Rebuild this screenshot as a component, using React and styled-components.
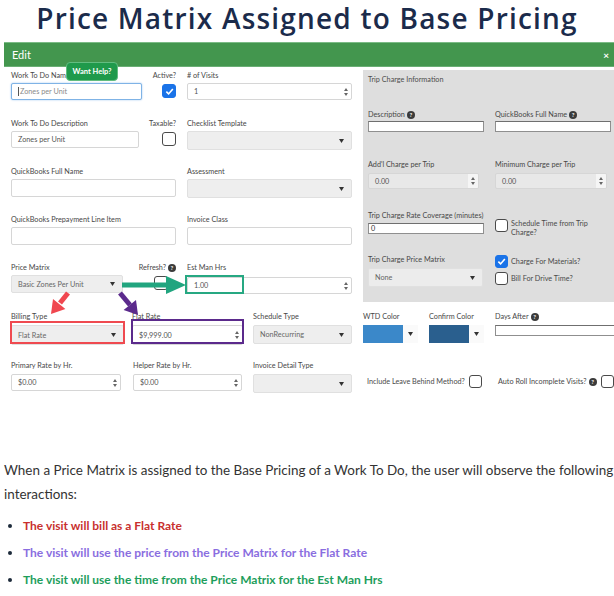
import React from "react";
import styled, { createGlobalStyle } from "styled-components";

const GlobalStyle = createGlobalStyle`
  html, body { margin: 0; padding: 0; background: #fff; }
  body { width: 614px; height: 596px; overflow: hidden; }
`;

const Page = styled.div`
  width: 614px;
  height: 596px;
  overflow: hidden;
`;

const Title = styled.h1`
  margin: 0;
  height: 42px;
  line-height: 36px;
  text-align: center;
  font-family: "Open Sans", sans-serif;
  font-weight: 600;
  font-size: 28px;
  letter-spacing: 1.2px;
  color: #1b2b4b;
  white-space: nowrap;
`;

const Modal = styled.section`
  position: relative;
  margin-left: 4px;
  width: 610px;
  font-family: Lato, "Open Sans", sans-serif;
`;

const ModalHeader = styled.div`
  height: 23px;
  background: #43964e;
  border-top: 1px solid #7bbb86;
  border-bottom: 1px solid #6aae75;
  display: flex;
  align-items: center;
  justify-content: space-between;
  padding: 0 5px 0 8px;
  color: #fff;
  font-size: 11px;
`;

const Close = styled.span`
  font-size: 10px;
  font-weight: 700;
`;

const HelpBadge = styled.div`
  position: absolute;
  left: 62px;
  top: 20px;
  width: 52px;
  height: 19px;
  box-sizing: border-box;
  border-radius: 4px;
  background: #1f9a4b;
  border: 1px solid #62bd80;
  color: #fff;
  font-size: 7.5px;
  font-weight: 700;
  display: flex;
  align-items: center;
  justify-content: center;
  z-index: 2;
`;

const FormBody = styled.div`
  position: relative;
  padding: 0 0 9px 7px;
`;

const TopSection = styled.div`
  display: flex;
  align-items: flex-start;
  gap: 11px;
`;

const LeftFields = styled.div`
  width: 341px;
  padding-top: 4px;
  display: flex;
  flex-direction: column;
`;

const LeftRow = styled.div`
  display: grid;
  grid-template-columns: 165px 165px;
  column-gap: 11px;
  align-items: start;
  height: 48px;
  &:last-child {
    height: auto;
  }
`;

const ColA = styled.div`
  display: flex;
  justify-content: space-between;
  align-items: flex-start;
`;

const Field = styled.div`
  display: flex;
  flex-direction: column;
  gap: ${({ $gap }) => $gap ?? 2}px;
  width: ${({ $w }) => ($w ? `${$w}px` : "100%")};
`;

const Label = styled.div`
  font-size: 7.25px;
  line-height: 10px;
  color: #474747;
  white-space: nowrap;
  display: flex;
  align-items: center;
  gap: 2px;
`;

const Help = styled.span`
  display: inline-flex;
  width: 8px;
  height: 8px;
  border-radius: 50%;
  background: #3b3b3b;
  color: #fff;
  font-size: 6px;
  font-weight: 700;
  align-items: center;
  justify-content: center;
`;

const TextBox = styled.div`
  box-sizing: border-box;
  height: ${({ $h }) => $h ?? 18}px;
  border: 1px solid ${({ $focus }) => ($focus ? "#7fb3e6" : "#d6d6d6")};
  box-shadow: ${({ $focus }) => ($focus ? "0 0 2px #9cc6ee" : "none")};
  border-radius: 2px;
  background: ${({ $bg }) => $bg ?? "#fff"};
  padding: 0 0 0 6px;
  font-size: 7.25px;
  color: ${({ $muted }) => ($muted ? "#8a8a8a" : "#555")};
  display: flex;
  align-items: center;
  justify-content: space-between;
  overflow: hidden;
  white-space: nowrap;
`;

const ThinBox = styled.div`
  box-sizing: border-box;
  height: ${({ $h }) => $h ?? 11}px;
  width: ${({ $w }) => ($w ? `${$w}px` : "100%")};
  background: #fff;
  border: 1px solid #8f8f8f;
  border-top-color: #6f6f6f;
  font-size: 7.25px;
  color: #333;
  padding-left: 2px;
  display: flex;
  align-items: center;
`;

const Cursor = styled.span`
  display: inline-block;
  width: 1px;
  height: 9px;
  background: #555;
  margin-right: 1px;
  vertical-align: middle;
`;

const SpinCell = styled.div`
  width: 10px;
  height: 100%;
  display: flex;
  flex-direction: column;
  align-items: center;
  justify-content: center;
  gap: 2px;
  background: ${({ $bg }) => $bg ?? "transparent"};
`;

const SelectBox = styled.div`
  box-sizing: border-box;
  height: ${({ $h }) => $h ?? 19}px;
  border: 1px solid #e0e0e0;
  border-radius: 2px;
  background: ${({ $bg }) => $bg ?? "#eeeeee"};
  padding: 0 7px 0 6px;
  font-size: 7.25px;
  color: #666;
  display: flex;
  align-items: center;
  justify-content: space-between;
  white-space: nowrap;
`;

const CheckGroup = styled.div`
  display: flex;
  flex-direction: column;
  align-items: flex-end;
  gap: 3px;
  & > :last-child {
    margin-right: ${({ $inset }) => $inset ?? 0}px;
  }
`;

const Box = styled.div`
  box-sizing: border-box;
  width: ${({ $s }) => $s ?? 14}px;
  height: ${({ $s }) => $s ?? 14}px;
  flex: none;
  border-radius: 3px;
  border: 1.5px solid ${({ $on }) => ($on ? "#1a73e8" : "#4a4a4a")};
  background: ${({ $on }) => ($on ? "#1a73e8" : "#fff")};
  display: flex;
  align-items: center;
  justify-content: center;
`;

const TripPanel = styled.div`
  flex: 1;
  margin-top: 3px;
  background: #dedede;
  padding: 5px 0 15px 5px;
`;

const PanelTitle = styled.div`
  font-size: 7.25px;
  line-height: 10px;
  color: #4d4d4d;
`;

const TripGrid = styled.div`
  display: grid;
  grid-template-columns: 116px 116px;
  column-gap: 11px;
  align-items: start;
  margin-top: ${({ $mt }) => $mt}px;
`;

const CheckList = styled.div`
  display: flex;
  flex-direction: column;
  gap: 4px;
  margin-top: ${({ $mt }) => $mt ?? 0}px;
`;

const CheckItem = styled.div`
  display: flex;
  align-items: ${({ $top }) => ($top ? "flex-start" : "center")};
  gap: 3px;
  font-size: 7.25px;
  line-height: 9px;
  color: #4a4a4a;
`;

const BottomRow = styled.div`
  display: grid;
  grid-template-columns: ${({ $cols }) => $cols};
  align-items: start;
  margin-top: ${({ $mt }) => $mt}px;
`;

const ColorPick = styled.div`
  display: flex;
  height: 18px;
`;

const Swatch = styled.div`
  width: 40px;
  height: 18px;
  background: ${({ $c }) => $c};
`;

const CaretCell = styled.div`
  width: 15px;
  height: 18px;
  background: #fafafa;
  display: flex;
  align-items: center;
  justify-content: center;
`;

const InlineCheck = styled.div`
  display: flex;
  align-items: center;
  gap: 4px;
  margin-top: 14px;
  font-size: 7.25px;
  color: #4a4a4a;
  white-space: nowrap;
`;

const Overlay = styled.svg`
  position: absolute;
  left: 0;
  top: 0;
  pointer-events: none;
  z-index: 1;
`;

const Doc = styled.div`
  margin-top: 56px;
  padding-left: 4px;
  width: 660px;
  font-family: Lato, sans-serif;
  color: #333;
`;

const Para = styled.p`
  margin: 0;
  font-size: 13.45px;
  line-height: 24px;
`;

const Bullets = styled.ul`
  margin: 6px 0 0;
  padding-left: 19px;
  list-style: disc;
`;

const Bullet = styled.li`
  font-size: 12px;
  font-weight: 700;
  line-height: 27px;
  color: ${({ $c }) => $c};
  &::marker {
    color: #1d2b3a;
  }
`;

const Caret = () => (
  <svg width="5" height="4" viewBox="0 0 5 4">
    <path d="M0 0 L5 0 L2.5 4 Z" fill="#333" />
  </svg>
);

const Spinner = ({ bg }) => (
  <SpinCell $bg={bg}>
    <svg width="4" height="3" viewBox="0 0 4 3">
      <path d="M0 3 L4 3 L2 0 Z" fill="#666" />
    </svg>
    <svg width="4" height="3" viewBox="0 0 4 3">
      <path d="M0 0 L4 0 L2 3 Z" fill="#666" />
    </svg>
  </SpinCell>
);

const Check = ({ on, s }) => (
  <Box $on={on} $s={s}>
    {on && (
      <svg width="9" height="9" viewBox="0 0 10 10">
        <path d="M1.5 5.2 L4 7.7 L8.7 2.2" stroke="#fff" strokeWidth="1.8" fill="none" />
      </svg>
    )}
  </Box>
);

const Select = ({ value, h, bg }) => (
  <SelectBox $h={h} $bg={bg}>
    <span>{value}</span>
    <Caret />
  </SelectBox>
);

const NumBox = ({ value, h, bg, spinBg }) => (
  <TextBox $h={h} $bg={bg}>
    <span>{value}</span>
    <Spinner bg={spinBg} />
  </TextBox>
);

// arrows and boxes drawn over the form, coords relative to the form body
const Annotations = () => (
  <Overlay width="260" height="300">
    <rect x="182" y="209" width="57" height="17" fill="none" stroke="#26a882" strokeWidth="2" />
    <rect x="7" y="255" width="113" height="21" fill="none" stroke="#ef4a50" strokeWidth="2" />
    <rect x="128" y="253" width="111" height="23" fill="none" stroke="#5b2a8c" strokeWidth="2" />
    <line x1="118" y1="218" x2="164" y2="218" stroke="#21a57f" strokeWidth="5" />
    <polygon points="162,209 182,218 162,227" fill="#21a57f" />
    <line x1="64" y1="226" x2="56" y2="236" stroke="#f0474f" strokeWidth="5" />
    <polygon points="47,247 61.4,241.9 49,231.9" fill="#f0474f" />
    <line x1="116" y1="226" x2="126" y2="238" stroke="#5b2a8c" strokeWidth="5" />
    <polygon points="134,248 132,233 119.6,243" fill="#5b2a8c" />
  </Overlay>
);

export default function App() {
  return (
    <Page>
      <GlobalStyle />
      <Title>Price Matrix Assigned to Base Pricing</Title>
      <Modal>
        <ModalHeader>
          <span>Edit</span>
          <Close>×</Close>
        </ModalHeader>
        <HelpBadge>Want Help?</HelpBadge>
        <FormBody>
          <TopSection>
            <LeftFields>
              <LeftRow>
                <ColA>
                  <Field $w={131}>
                    <Label>Work To Do Name</Label>
                    <TextBox $focus $muted $h={17}>
                      <span><Cursor />Zones per Unit</span>
                    </TextBox>
                  </Field>
                  <CheckGroup>
                    <Label>Active?</Label>
                    <Check on />
                  </CheckGroup>
                </ColA>
                <Field>
                  <Label># of Visits</Label>
                  <NumBox value="1" h={17} />
                </Field>
              </LeftRow>
              <LeftRow>
                <ColA>
                  <Field $w={128}>
                    <Label>Work To Do Description</Label>
                    <TextBox $h={17}>Zones per Unit</TextBox>
                  </Field>
                  <CheckGroup>
                    <Label>Taxable?</Label>
                    <Check />
                  </CheckGroup>
                </ColA>
                <Field>
                  <Label>Checklist Template</Label>
                  <Select value="" />
                </Field>
              </LeftRow>
              <LeftRow>
                <Field>
                  <Label>QuickBooks Full Name</Label>
                  <TextBox />
                </Field>
                <Field>
                  <Label>Assessment</Label>
                  <Select value="" />
                </Field>
              </LeftRow>
              <LeftRow>
                <Field>
                  <Label>QuickBooks Prepayment Line Item</Label>
                  <TextBox />
                </Field>
                <Field>
                  <Label>Invoice Class</Label>
                  <TextBox />
                </Field>
              </LeftRow>
              <LeftRow>
                <ColA>
                  <Field $w={112}>
                    <Label>Price Matrix</Label>
                    <Select value="Basic Zones Per Unit" h={18} />
                  </Field>
                  <CheckGroup $inset={8}>
                    <Label>Refresh? <Help>?</Help></Label>
                    <Check />
                  </CheckGroup>
                </ColA>
                <Field $gap={4}>
                  <Label>Est Man Hrs</Label>
                  <NumBox value="1.00" h={17} />
                </Field>
              </LeftRow>
            </LeftFields>

            <TripPanel>
              <PanelTitle>Trip Charge Information</PanelTitle>
              <TripGrid $mt={25}>
                <Field $gap={1}>
                  <Label>Description <Help>?</Help></Label>
                  <ThinBox />
                </Field>
                <Field $gap={1}>
                  <Label>QuickBooks Full Name <Help>?</Help></Label>
                  <ThinBox />
                </Field>
              </TripGrid>
              <TripGrid $mt={28}>
                <Field $w={111} $gap={3}>
                  <Label>Add'l Charge per Trip</Label>
                  <NumBox value="0.00" h={16} bg="#e8e8e8" spinBg="#f5f5f5" />
                </Field>
                <Field $w={112} $gap={3}>
                  <Label>Minimum Charge per Trip</Label>
                  <NumBox value="0.00" h={16} bg="#e8e8e8" spinBg="#f5f5f5" />
                </Field>
              </TripGrid>
              <TripGrid $mt={22}>
                <Field $gap={2}>
                  <Label>Trip Charge Rate Coverage (minutes)</Label>
                  <ThinBox>0</ThinBox>
                </Field>
                <CheckList $mt={8}>
                  <CheckItem $top>
                    <Check s={13} />
                    <span>Schedule Time from Trip<br />Charge?</span>
                  </CheckItem>
                </CheckList>
              </TripGrid>
              <TripGrid $mt={18}>
                <Field $w={115} $gap={3}>
                  <Label>Trip Charge Price Matrix</Label>
                  <Select value="None" bg="#ececec" />
                </Field>
                <CheckList>
                  <CheckItem>
                    <Check on s={13} />
                    <span>Charge For Materials?</span>
                  </CheckItem>
                  <CheckItem>
                    <Check s={13} />
                    <span>Bill For Drive Time?</span>
                  </CheckItem>
                </CheckList>
              </TripGrid>
            </TripPanel>
          </TopSection>

          <BottomRow $mt={10} $cols="121px 121px 110px 66px 66px 1fr">
            <Field $w={113} $gap={3}>
              <Label>Billing Type</Label>
              <Select value="Flat Rate" h={20} />
            </Field>
            <Field $w={111} $gap={3}>
              <Label>Flat Rate</Label>
              <NumBox value="$9,999.00" h={20} />
            </Field>
            <Field $w={99} $gap={3}>
              <Label>Schedule Type</Label>
              <Select value="NonRecurring" h={19} />
            </Field>
            <Field $gap={3}>
              <Label>WTD Color</Label>
              <ColorPick>
                <Swatch $c="#3b88c9" />
                <CaretCell><Caret /></CaretCell>
              </ColorPick>
            </Field>
            <Field $gap={3}>
              <Label>Confirm Color</Label>
              <ColorPick>
                <Swatch $c="#2a5f8e" />
                <CaretCell><Caret /></CaretCell>
              </ColorPick>
            </Field>
            <Field $w={125} $gap={3}>
              <Label>Days After <Help>?</Help></Label>
              <ThinBox />
            </Field>
          </BottomRow>

          <BottomRow $mt={16} $cols="122px 120px 114px 131px 1fr">
            <Field $w={110} $gap={3}>
              <Label>Primary Rate by Hr.</Label>
              <NumBox value="$0.00" h={17} />
            </Field>
            <Field $w={109} $gap={3}>
              <Label>Helper Rate by Hr.</Label>
              <NumBox value="$0.00" h={17} />
            </Field>
            <Field $w={99} $gap={3}>
              <Label>Invoice Detail Type</Label>
              <Select value="" />
            </Field>
            <InlineCheck>
              <span>Include Leave Behind Method?</span>
              <Check s={13} />
            </InlineCheck>
            <InlineCheck>
              <Label>Auto Roll Incomplete Visits? <Help>?</Help></Label>
              <Check s={13} />
            </InlineCheck>
          </BottomRow>
          <Annotations />
        </FormBody>
      </Modal>

      <Doc>
        <Para>
          When a Price Matrix is assigned to the Base Pricing of a Work To Do, the user will observe the following
          <br />
          interactions:
        </Para>
        <Bullets>
          <Bullet $c="#c8302e">The visit will bill as a Flat Rate</Bullet>
          <Bullet $c="#8a6ee0">The visit will use the price from the Price Matrix for the Flat Rate</Bullet>
          <Bullet $c="#1e9e5c">The visit will use the time from the Price Matrix for the Est Man Hrs</Bullet>
        </Bullets>
      </Doc>
    </Page>
  );
}
